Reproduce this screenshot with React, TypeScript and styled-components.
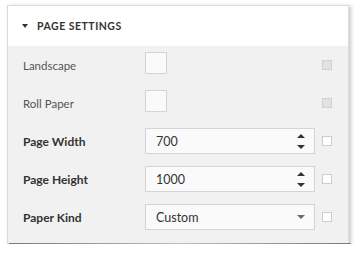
import React from 'react';
import styled, { createGlobalStyle } from 'styled-components';

const GlobalStyle = createGlobalStyle`
  body {
    margin: 0;
    background: #ffffff;
    font-family: Lato, 'Liberation Sans', sans-serif;
  }
`;

const Page = styled.div`
  padding: 5px 0 0 7px;
`;

const Panel = styled.div`
  position: relative;
  width: 340px;
  border: 1px solid #dcdcdc;
  background: #f1f1f1;
  box-shadow: 2px 1px 4px rgba(0, 0, 0, 0.22);

  /* curled paper shadow under the bottom edge */
  &::after {
    content: '';
    position: absolute;
    left: 1px;
    right: -3px;
    top: 100%;
    height: 8px;
    background:
      radial-gradient(ellipse 60% 100% at 0% 0%, rgba(0, 0, 0, 0.38), rgba(0, 0, 0, 0) 85%),
      radial-gradient(ellipse 60% 100% at 100% 0%, rgba(0, 0, 0, 0.38), rgba(0, 0, 0, 0) 85%),
      linear-gradient(rgba(0, 0, 0, 0.14), rgba(0, 0, 0, 0));
  }
`;

const Header = styled.div`
  display: flex;
  align-items: center;
  height: 40px;
  padding-left: 14px;
  background: #ffffff;
`;

const Caret = styled.span`
  width: 0;
  height: 0;
  border-left: 3px solid transparent;
  border-right: 3px solid transparent;
  border-top: 4px solid #333333;
  margin-right: 9px;
  margin-top: -1px;
`;

const Title = styled.span`
  font-size: 10.5px;
  font-weight: 700;
  letter-spacing: 0.5px;
  color: #333333;
`;

const Body = styled.div`
  padding: 0 16px 7px 15px;
`;

const Row = styled.div`
  display: flex;
  align-items: center;
  height: 38px;
`;

const Label = styled.div<{ strong?: boolean }>`
  width: 122px;
  font-size: ${(p) => (p.strong ? '12px' : '11.5px')};
  font-weight: ${(p) => (p.strong ? 700 : 400)};
  color: ${(p) => (p.strong ? '#333333' : '#555555')};
`;

const Editor = styled.div`
  width: 170px;
  display: flex;
  align-items: center;
`;

const BoolBox = styled.div`
  box-sizing: border-box;
  width: 22px;
  height: 22px;
  margin-top: -5px;
  border: 1px solid #d4d4d4;
  background: #fafafa;
`;

const Field = styled.div`
  box-sizing: border-box;
  width: 170px;
  height: 26px;
  display: flex;
  align-items: center;
  padding: 0 9px 0 10px;
  border: 1px solid #d4d4d4;
  background: #fafafa;
  font-size: 12.5px;
  color: #333333;
`;

const Value = styled.span`
  flex: 1;
`;

const Spin = styled.div`
  display: flex;
  flex-direction: column;
  gap: 5px;
`;

const Check = styled.div<{ disabled?: boolean }>`
  box-sizing: border-box;
  width: 10px;
  height: 10px;
  margin-left: 7px;
  border: 1px solid ${(p) => (p.disabled ? '#d0d0d0' : '#cccccc')};
  background: ${(p) => (p.disabled ? '#e2e2e2' : '#ffffff')};
`;

const SpinButtons = () => (
  <Spin>
    <svg width="8" height="5" viewBox="0 0 8 5">
      <path d="M4 0 L8 4 L0 4 Z" fill="#333333" />
    </svg>
    <svg width="8" height="5" viewBox="0 0 8 5">
      <path d="M0 1 L8 1 L4 5 Z" fill="#333333" />
    </svg>
  </Spin>
);

const DropArrow = () => (
  <svg width="8" height="4" viewBox="0 0 8 4">
    <path d="M0 0 L8 0 L4 4 Z" fill="#6a6a6a" />
  </svg>
);

export default function App() {
  return (
    <Page>
      <GlobalStyle />
      <Panel>
        <Header>
          <Caret />
          <Title>PAGE SETTINGS</Title>
        </Header>
        <Body>
          <Row>
            <Label>Landscape</Label>
            <Editor>
              <BoolBox />
            </Editor>
            <Check disabled />
          </Row>
          <Row>
            <Label>Roll Paper</Label>
            <Editor>
              <BoolBox />
            </Editor>
            <Check disabled />
          </Row>
          <Row>
            <Label strong>Page Width</Label>
            <Field>
              <Value>700</Value>
              <SpinButtons />
            </Field>
            <Check />
          </Row>
          <Row>
            <Label strong>Page Height</Label>
            <Field>
              <Value>1000</Value>
              <SpinButtons />
            </Field>
            <Check />
          </Row>
          <Row>
            <Label strong>Paper Kind</Label>
            <Field>
              <Value>Custom</Value>
              <DropArrow />
            </Field>
            <Check />
          </Row>
        </Body>
      </Panel>
    </Page>
  );
}
